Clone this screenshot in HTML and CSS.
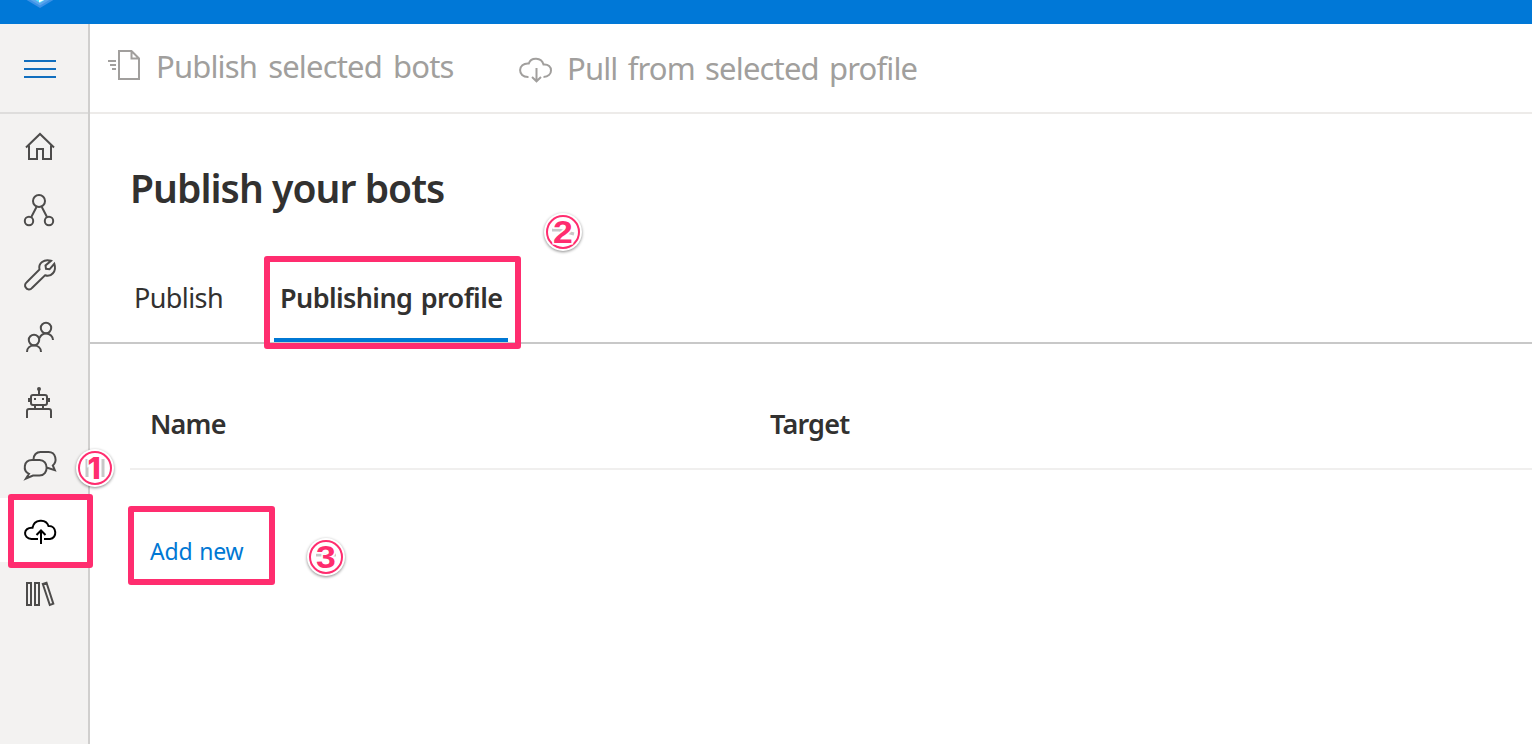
FILE: index.html
```html
<!DOCTYPE html>
<html lang="en">
<head>
<meta charset="utf-8">
<title>Publish your bots</title>
<link rel="stylesheet" href="styles.css">
</head>
<body>
<header class="topbar">
  <svg class="logo" viewBox="0 0 60 24"><path d="M25 -1 40 8 55 -1Z" fill="#3c91e6"/><path d="M29 -1 40 5.500 51 -1Z" fill="#5aa5ec"/><path d="M34 -1 40 3 46 -1Z" fill="#55e8ff"/><path d="M39 -1V2.500L44 0V-1Z" fill="#fff"/></svg>
</header>
<div class="shell">
  <nav class="rail">
    <button class="menu" aria-label="Menu"><span class="bar"></span><span class="bar"></span><span class="bar"></span></button>
    <a class="item"><svg viewBox="0 114 88 64"><path d="M26 147.500 40 134 54 147.500M29 145.500V159H37V149H43V159H51V145.500"/></svg></a>
    <a class="item"><svg viewBox="0 178 88 64"><circle cx="39" cy="201" r="6"/><circle cx="29" cy="221" r="4.200"/><circle cx="49" cy="221" r="4.200"/><path d="M36.500 207 31.300 217M41.800 207 47 217"/></svg></a>
    <a class="item"><svg viewBox="0 242 88 64"><path d="M39.500 269.500C38 263.500 44 258.500 51 260.800L45.500 265.500 46 268.800 49.500 269.300 54.300 263.800C57 271.500 51 277.500 45 275.300L32 288C30.500 290 27 290 25.800 287.500 24.500 286 25 283.500 26.500 282.500Z"/></svg></a>
    <a class="item"><svg viewBox="0 306 88 64"><circle cx="46" cy="328" r="5.200"/><circle cx="34" cy="340" r="5.200"/><path d="M39.500 338C41 334.800 43.300 333.500 46 333.500 50 333.500 53 336.500 53 340M27 352C27 348 30 345.500 34 345.500S41 348 41 352"/></svg></a>
    <a class="item"><svg viewBox="0 370 88 64"><circle cx="39" cy="389" r="1" /><path d="M39 390V395M35 405.500V409M43 405.500V409M27 418V411Q27 409 29 409H49Q51 409 51 411V418M29 398V402M49 398V402"/><rect x="31" y="395" width="16" height="10" rx="2"/><path d="M34 399H36M42 399H44"/></svg></a>
    <a class="item"><svg viewBox="0 434 88 64"><path d="M29 473.800C22.500 471 23.500 460 32 460H39.500C49 460 49 475.500 39.500 475.500H33L26 478.500ZM33.500 459.500C33.500 455 36.500 452 40.500 452H48.500C56 452 57.500 461.500 52.800 465.500L54.800 470.200 46.500 467.500"/></svg></a>
    <a class="item active"><svg viewBox="0 498 88 64"><path d="M38 539H31.500C22.500 538.500 23 527 32.500 527.800 34 519 46 518.300 48.500 526 57 525.500 57.500 538.500 50 539H44M41 544V531M36.500 535 41 530.500 45.500 535"/></svg></a>
    <a class="item"><svg viewBox="0 562 88 64"><path d="M27 583H31V605H27ZM35 583H39V605H35ZM42.800 584 46.500 582.800 53.300 603.700 49.800 605Z"/></svg></a>
  </nav>
  <main class="content">
    <div class="toolbar">
      <button class="command publish"><svg class="doc" viewBox="107 49 34 32"><path d="M119 51H131.500L139 58.500V79H119ZM131.500 51V58.500H139M108 61H116M110 65H116M112 69H116"/></svg><span class="label-publish">Publish selected bots</span></button>
      <button class="command pull"><svg class="cloud" viewBox="518 56 35 27"><path d="M528.500 77C517 77.500 517.500 62.500 528.800 63.500 531 57 541.500 57 543.500 64.500 553.500 63.500 553.500 77 543.500 77M536.500 68V81M532 77 536.500 81.300 541 77"/></svg><span class="label-pull">Pull from selected profile</span></button>
    </div>
    <h1 class="title"><span>Publish your bots</span></h1>
    <div class="tabs">
      <a class="tab first"><span>Publish</span></a>
      <a class="tab selected"><span>Publishing profile</span></a>
    </div>
    <div class="table">
      <div class="thead"><div class="cell name"><span>Name</span></div><div class="cell target"><span>Target</span></div></div>
      <div class="add"><a>Add new</a></div>
    </div>
  </main>
</div>
<div class="mark mark-nav"></div>
<div class="mark mark-tab"></div>
<div class="mark mark-add"></div>
<svg class="badge badge-one" viewBox="-24 -24 48 48"><circle class="disc" r="19"/><path class="ghost" d="M-8-9V9M8-9V9"/><circle class="ring" r="16"/><text class="one" x="-1" y="11">1</text></svg>
<svg class="badge badge-two" viewBox="-24 -24 48 48"><circle class="disc" r="19"/><path class="ghost" d="M-11-2H-4L11 2"/><circle class="ring" r="16"/><text transform="scale(1.15 1)" y="11">2</text></svg>
<svg class="badge badge-three" viewBox="-24 -24 48 48"><circle class="disc" r="19"/><path class="ghost" d="M-10-2H10"/><circle class="ring" r="16"/><text transform="scale(1.15 1)" y="11">3</text></svg>
</body>
</html>
```
FILE: styles.css
```css
* { box-sizing: border-box; }
body {
  margin: 0;
  width: 1532px;
  height: 744px;
  overflow: hidden;
  position: relative;
  display: flex;
  flex-direction: column;
  background: #fff;
  color: #323130;
  font-family: "Noto Sans", "Open Sans", sans-serif;
}
button { border: 0; padding: 0; background: none; font: inherit; color: inherit; }
svg { display: block; fill: none; stroke: none; }
.topbar { height: 24px; flex: none; background: #0078d7; }
.logo { width: 60px; height: 24px; }
.shell { flex: 1; display: flex; min-height: 0; }
.rail { width: 90px; flex: none; background: #f3f2f1; border-right: 2px solid #d0cfce; }
.menu {
  width: 88px;
  height: 90px;
  display: flex;
  flex-direction: column;
  gap: 6px;
  padding: 36px 0 0 24px;
  border-bottom: 2px solid #dedddc;
}
.bar { width: 32px; height: 2px; background: #106ebe; }
.item { display: block; width: 88px; height: 64px; }
.item svg { width: 88px; height: 64px; stroke: #4d4c4b; stroke-width: 2; }
.item.active { width: 90px; background: #fff; }
.item.active svg { stroke: #000; }
.content { flex: 1; min-width: 0; }
.toolbar { height: 90px; display: flex; border-bottom: 2px solid #edebe9; color: #a19f9d; font-size: 31px; line-height: 44px; }
.toolbar svg { stroke: #a19f9d; stroke-width: 2; }
.command { display: flex; align-items: flex-start; white-space: nowrap; }
.publish { width: 428px; padding: 20px 0 0 17px; }
.pull { padding-top: 22px; }
.doc { width: 34px; height: 32px; margin: 5px 15px 0 0; }
.cloud { width: 35px; height: 27px; margin: 10px 14px 0 0; }
.label-publish { letter-spacing: -0.85px; word-spacing: 4px; }
.label-pull { letter-spacing: -0.85px; word-spacing: 3px; }
.title { margin: 0; padding: 46px 0 0 40px; height: 150px; font-size: 39px; line-height: 56px; font-weight: 600; letter-spacing: -0.95px; }
.tabs { height: 80px; display: flex; border-bottom: 2px solid #c8c8c8; font-size: 27px; line-height: 36px; white-space: nowrap; }
.tab { padding-top: 16px; }
.first { width: 184px; padding-left: 44px; letter-spacing: -0.6px; }
.selected { width: 234px; padding-left: 6px; font-weight: 600; letter-spacing: -0.6px; word-spacing: 2px; border-bottom: 4px solid #0078d4; }
.table { padding-left: 40px; }
.thead { height: 126px; display: flex; padding: 62px 0 0 20px; border-bottom: 2px solid #f0efee; font-size: 27px; line-height: 36px; font-weight: 600; letter-spacing: -0.8px; }
.name { width: 620px; }
.add { padding: 64px 0 0 20px; color: #0078d4; font-size: 23px; line-height: 34px; letter-spacing: -0.2px; word-spacing: 1px; }
.mark { position: absolute; border: 6px solid #ff2d6f; border-radius: 3px; }
.mark-nav { left: 8px; top: 494px; width: 85px; height: 74px; }
.mark-tab { left: 264px; top: 256px; width: 257px; height: 93px; }
.mark-add { left: 128px; top: 506px; width: 147px; height: 79px; }
.badge { position: absolute; width: 48px; height: 48px; overflow: visible; }
.badge-one { left: 71px; top: 444px; }
.badge-two { left: 539px; top: 208px; }
.badge-three { left: 302px; top: 533px; }
.disc { fill: #fff; filter: drop-shadow(0 1.500px 1.500px rgba(0, 0, 0, 0.45)); }
.ring { stroke: #ff2d6f; stroke-width: 2; }
.ghost { stroke: #c8c8c8; stroke-width: 3; }
.badge text {
  fill: #ff2d6f;
  stroke: #fff;
  stroke-width: 3px;
  paint-order: stroke;
  font: bold 31px "Liberation Sans", sans-serif;
  text-anchor: middle;
}
.badge .one { font-family: Inter, sans-serif; font-weight: 800; font-size: 30px; }
```
